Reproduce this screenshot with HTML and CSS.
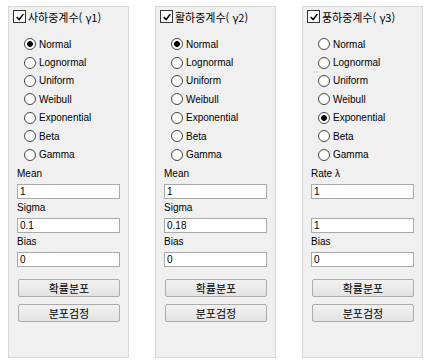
FILE: index.html
```html
<!DOCTYPE html>
<html lang="ko">
<head>
  <meta charset="UTF-8">
  <title>하중계수 분포 설정</title>
  <link rel="stylesheet" href="styles.css">
</head>
<body>
  <div class="panels">

    <div class="panel">
      <label class="title">
        <span class="check"><svg viewBox="0 0 12 12" width="10" height="10"><path d="M2 6 L5 9 L10 2.5" fill="none" stroke="#000" stroke-width="1.8"/></svg></span>
        사하중계수( γ1)
      </label>
      <div class="options">
        <div class="opt"><span class="radio on"></span>Normal</div>
        <div class="opt"><span class="radio"></span>Lognormal</div>
        <div class="opt"><span class="radio"></span>Uniform</div>
        <div class="opt"><span class="radio"></span>Weibull</div>
        <div class="opt"><span class="radio"></span>Exponential</div>
        <div class="opt"><span class="radio"></span>Beta</div>
        <div class="opt"><span class="radio"></span>Gamma</div>
      </div>
      <div class="field first"><div class="lbl">Mean</div><input class="box" type="text" value="1"></div>
      <div class="field"><div class="lbl">Sigma</div><input class="box" type="text" value="0.1"></div>
      <div class="field"><div class="lbl">Bias</div><input class="box" type="text" value="0"></div>
      <button class="btn first">확률분포</button>
      <button class="btn">분포검정</button>
    </div>

    <div class="panel">
      <label class="title">
        <span class="check"><svg viewBox="0 0 12 12" width="10" height="10"><path d="M2 6 L5 9 L10 2.5" fill="none" stroke="#000" stroke-width="1.8"/></svg></span>
        활하중계수( γ2)
      </label>
      <div class="options">
        <div class="opt"><span class="radio on"></span>Normal</div>
        <div class="opt"><span class="radio"></span>Lognormal</div>
        <div class="opt"><span class="radio"></span>Uniform</div>
        <div class="opt"><span class="radio"></span>Weibull</div>
        <div class="opt"><span class="radio"></span>Exponential</div>
        <div class="opt"><span class="radio"></span>Beta</div>
        <div class="opt"><span class="radio"></span>Gamma</div>
      </div>
      <div class="field first"><div class="lbl">Mean</div><input class="box" type="text" value="1"></div>
      <div class="field"><div class="lbl">Sigma</div><input class="box" type="text" value="0.18"></div>
      <div class="field"><div class="lbl">Bias</div><input class="box" type="text" value="0"></div>
      <button class="btn first">확률분포</button>
      <button class="btn">분포검정</button>
    </div>

    <div class="panel">
      <label class="title">
        <span class="check"><svg viewBox="0 0 12 12" width="10" height="10"><path d="M2 6 L5 9 L10 2.5" fill="none" stroke="#000" stroke-width="1.8"/></svg></span>
        풍하중계수( γ3)
      </label>
      <div class="options">
        <div class="opt"><span class="radio"></span>Normal</div>
        <div class="opt"><span class="radio"></span>Lognormal</div>
        <div class="opt"><span class="radio"></span>Uniform</div>
        <div class="opt"><span class="radio"></span>Weibull</div>
        <div class="opt"><span class="radio on"></span>Exponential</div>
        <div class="opt"><span class="radio"></span>Beta</div>
        <div class="opt"><span class="radio"></span>Gamma</div>
      </div>
      <div class="field first"><div class="lbl">Rate λ</div><input class="box" type="text" value="1"></div>
      <div class="field"><div class="lbl"></div><input class="box" type="text" value="1"></div>
      <div class="field"><div class="lbl">Bias</div><input class="box" type="text" value="0"></div>
      <button class="btn first">확률분포</button>
      <button class="btn">분포검정</button>
    </div>

  </div>
</body>
</html>
```

FILE: styles.css
```css
body {
  margin: 0;
  background: #fff;
  font-family: 'Liberation Sans', 'Noto Sans CJK KR', sans-serif;
  font-size: 10px;
  color: #000;
}

.panels {
  display: flex;
  gap: 26px;
  padding: 6px 0 0 8px;
}

.panel {
  width: 121px;
  height: 352px;
  box-sizing: border-box;
  border: 1px solid #d8d8d8;
  background: #f0f0f0;
  display: flex;
  flex-direction: column;
  padding: 3px 0 0 4px;
}

.title {
  display: flex;
  align-items: center;
  height: 13px;
  gap: 2px;
  font-family: 'Noto Sans CJK KR', sans-serif;
  font-size: 11px;
}

.check {
  width: 11px;
  height: 11px;
  border: 1px solid #333;
  background: #fff;
  display: flex;
  align-items: center;
  justify-content: center;
}

.options {
  margin-top: 12px;
  padding-left: 11px;
}

.opt {
  display: flex;
  align-items: center;
  height: 18.4px;
  gap: 3px;
}

.radio {
  width: 10px;
  height: 10px;
  border: 1px solid #444;
  border-radius: 50%;
  background: #fff;
}

.radio.on {
  background: radial-gradient(circle, #000 0 2.6px, #fff 3.2px);
}

.field {
  margin-top: 2px;
  padding-left: 4px;
  display: flex;
  flex-direction: column;
}

.field.first {
  margin-top: 3px;
}

.lbl {
  height: 14px;
  line-height: 14px;
}

.box {
  width: 103px;
  height: 15px;
  box-sizing: border-box;
  margin: 3px 0 0;
  border: 1px solid #a9a9a9;
  background: #fff;
  padding: 0 2px;
  font-family: 'Liberation Sans', sans-serif;
  font-size: 10px;
  outline: none;
}

.btn {
  width: 102px;
  height: 18px;
  margin: 7px 0 0 5px;
  box-sizing: border-box;
  border: 1px solid #acacac;
  border-radius: 2px;
  background: linear-gradient(#f2f2f2, #e3e3e3);
  font-family: 'Noto Sans CJK KR', sans-serif;
  font-size: 11px;
  padding: 0;
  line-height: 16px;
}

.btn.first {
  margin-top: 12px;
}
```
